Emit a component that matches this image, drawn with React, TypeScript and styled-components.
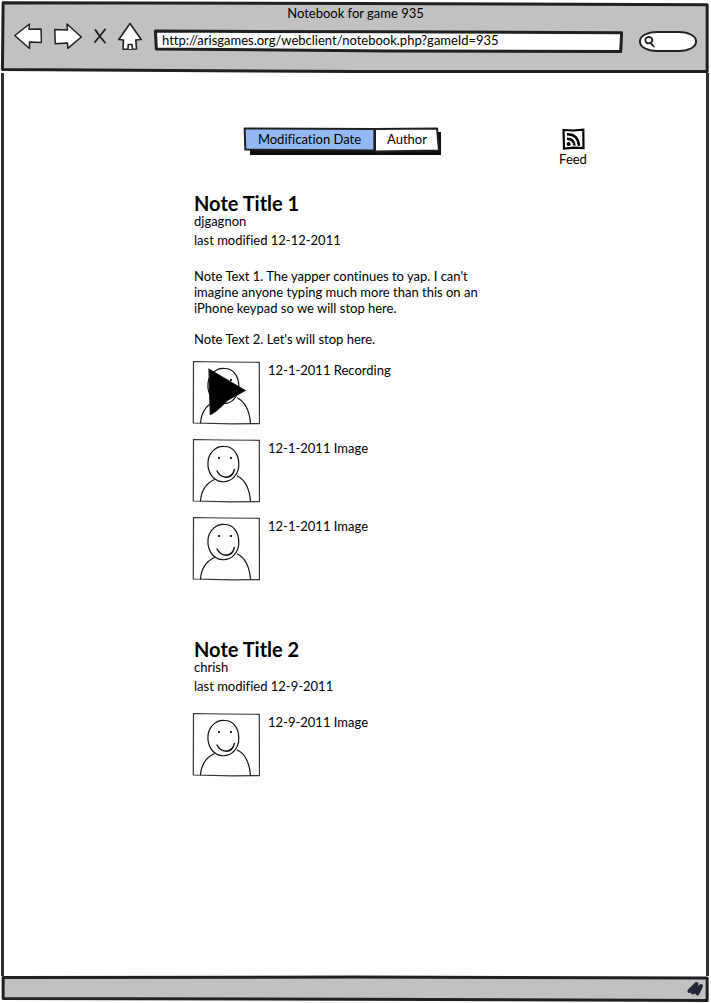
import React, { useState } from "react";
import styled, { createGlobalStyle } from "styled-components";

const ink = "#1e2022";
const grey = "#c1c1c1";

const GlobalStyle = createGlobalStyle`
  * { box-sizing: border-box; }
  body {
    margin: 0;
    background: #fff;
    color: #000;
    font: 13px/16px Lato, "Open Sans", sans-serif;
    font-variant-ligatures: none;
  }
  button, input { font: inherit; color: inherit; font-variant-ligatures: none; }
  h2, p, ul { margin: 0; padding: 0; }
`;

const BrowserWindow = styled.div`
  display: flex;
  flex-direction: column;
  min-height: 100vh;
  padding: 2px 1px;
`;

const OutlineSvg = styled.svg`
  position: absolute;
  inset: 0;
  width: 100%;
  height: 100%;
  overflow: visible;
  pointer-events: none;
  z-index: -1;
`;

/* A slightly uneven four-sided outline that stretches with its parent. */
function Outline({ points, fill, weight = 3 }: { points: string; fill: string; weight?: number }) {
  return (
    <OutlineSvg viewBox="0 0 100 100" preserveAspectRatio="none" aria-hidden="true">
      <polygon points={points} fill={fill} stroke={ink} strokeWidth={weight} strokeLinejoin="round" vectorEffect="non-scaling-stroke" />
    </OutlineSvg>
  );
}

const Header = styled.header`
  position: relative;
  z-index: 0;
  height: 71px;
  padding: 3px 13px 0 13px;
`;

const WindowTitle = styled.div`
  text-align: center;
`;

const Toolbar = styled.div`
  display: flex;
  align-items: flex-end;
  gap: 15px;
  height: 31px;
`;

const Nav = styled.nav`
  display: flex;
  align-items: center;
  gap: 12px;
  padding-bottom: 2px;
  margin-right: -3px;
`;

const IconButton = styled.button`
  display: flex;
  padding: 0;
  border: 0;
  background: none;
  cursor: pointer;
`;

const AddressBox = styled.label`
  position: relative;
  z-index: 0;
  display: flex;
  flex: 1;
  height: 22px;
`;

const AddressInput = styled.input`
  width: 100%;
  padding: 0 8px 2px;
  border: 0;
  outline: 0;
  background: none;
`;

const SearchBox = styled.label`
  display: flex;
  align-items: center;
  width: 58px;
  height: 21px;
  padding-left: 3px;
  border: 2px solid ${ink};
  border-radius: 18px / 10px;
  background: #fff;
`;

const SearchInput = styled.input`
  width: 34px;
  padding: 0;
  border: 0;
  outline: 0;
  background: none;
`;

const Page = styled.main`
  flex: 1;
  margin: 0 1px 0 0;
  padding: 55px 116px 48px 188px;
  border: solid #2e3034;
  border-width: 0 3px;
`;

const PageControls = styled.div`
  display: flex;
  justify-content: space-between;
  align-items: flex-start;
  height: 39px;
  padding-left: 52px;
`;

const Tabs = styled.div`
  position: relative;
  z-index: 0;
  display: flex;
  height: 24px;
  &::before {
    content: "";
    position: absolute;
    z-index: -1;
    inset: 4px -2px -3px 6px;
    background: #0c0e12;
  }
`;

const Tab = styled.button<{ $width: number }>`
  position: relative;
  z-index: 0;
  width: ${(p) => p.$width}px;
  padding: 0 0 2px;
  border: 0;
  background: none;
  text-align: center;
  cursor: pointer;
`;

const FeedLink = styled.a`
  display: flex;
  flex-direction: column;
  align-items: center;
  gap: 1px;
  width: 34px;
  color: inherit;
  text-decoration: none;
`;

const Note = styled.article`
  padding-top: 26px;
  & + & { padding-top: 58px; }
`;

const NoteTitle = styled.h2`
  padding-left: 2px;
  font-size: 20px;
  font-weight: 700;
  line-height: 20px;
`;

const NoteMeta = styled.p`
  padding: 0 0 3px 2px;
`;

const NoteText = styled.p`
  max-width: 290px;
  margin-bottom: 15px;
  padding-left: 2px;
`;

const NoteBody = styled.div`
  padding-top: 17px;
`;

const Attachments = styled.ul`
  display: grid;
  gap: 13px;
  margin-top: -2px;
  list-style: none;
`;

const Attachment = styled.li`
  display: flex;
  gap: 8px;
  height: 65px;
`;

const Caption = styled.span`
  padding-top: 2px;
`;

const Footer = styled.footer`
  position: relative;
  z-index: 0;
  display: flex;
  justify-content: flex-end;
  height: 25px;
  padding: 5px 6px 0 0;
`;

function Photo({ playable = false }: { playable?: boolean }) {
  return (
    <svg width="68" height="65" viewBox="0 0 68 65" fill="none" stroke="#111" strokeWidth="1.2" role="img" aria-label={playable ? "Play recording" : "Portrait"}>
      <path d="M1.5 1.5 L30 2 L67.3 2.3 L67.5 63.7 L40 63.8 L1.3 63 Z" stroke="#34343a" />
      <path d="M32 8.5 C24 8 16.5 15 16 24 C15.3 34 21 43 30 43.7 C40 44.5 47 36 46.8 26 C46.8 16 41 8 32 8.5Z" />
      <path d="M24.7 32.5 Q28 39 34 39.2 Q41 39 42.5 31" strokeWidth="1.4" />
      <path d="M22.5 41.5 Q9.5 47.5 8.5 63.3 M45 37.7 Q57 43.5 58.5 63.5" />
      <path d="M26.1 20h1.8 M38.1 20h1.8" strokeWidth="1.8" />
      {playable && <path d="M17 9.3 L53 30.6 L35 40.5 Q23 53 18.3 54.3 Z" fill="#000" />}
    </svg>
  );
}

type NoteData = {
  title: string;
  author: string;
  modified: string;
  texts: string[];
  files: { date: string; kind: "Image" | "Recording" }[];
};

const notes: NoteData[] = [
  {
    title: "Note Title 1",
    author: "djgagnon",
    modified: "12-12-2011",
    texts: [
      "Note Text 1. The yapper continues to yap. I can't imagine anyone typing much more than this on an iPhone keypad so we will stop here.",
      "Note Text 2. Let's will stop here.",
    ],
    files: [
      { date: "12-1-2011", kind: "Recording" },
      { date: "12-1-2011", kind: "Image" },
      { date: "12-1-2011", kind: "Image" },
    ],
  },
  {
    title: "Note Title 2",
    author: "chrish",
    modified: "12-9-2011",
    texts: [],
    files: [{ date: "12-9-2011", kind: "Image" }],
  },
];

export default function App() {
  const [sort, setSort] = useState("date");
  const tint = (on: boolean) => (on ? "#94b9f2" : "#fff");
  return (
    <BrowserWindow>
      <GlobalStyle />
      <Header>
        <Outline points="0.3,1 50,2 99.6,4 99.6,98 50,98 0.2,95" fill={grey} />
        <WindowTitle>Notebook for game 935</WindowTitle>
        <Toolbar>
          <Nav aria-label="Browser">
            <IconButton aria-label="Back">
              <svg width="28" height="28" viewBox="0 0 28 28" fill="#fff" stroke={ink} strokeWidth="1.5" strokeLinejoin="round">
                <path d="M0.8 13.5 L15.5 2 L15 7.3 L27 7 L27.5 20.5 L15.5 20 L15.5 26.5 Z" />
              </svg>
            </IconButton>
            <IconButton aria-label="Forward">
              <svg width="28" height="28" viewBox="0 0 28 28" fill="#fff" stroke={ink} strokeWidth="1.5" strokeLinejoin="round">
                <path d="M0.8 7.5 L13.5 8 L13 2 L27.3 15 L13.8 26.3 L13.5 21 L1.2 21.8 Z" />
              </svg>
            </IconButton>
            <IconButton aria-label="Stop">
              <svg width="12" height="28" viewBox="1 0 12 28" fill="none" stroke={ink} strokeWidth="1.8" strokeLinecap="round">
                <path d="M2.4 8 Q6 14 12 20.5 M12 7.5 Q7 14 2 20" />
              </svg>
            </IconButton>
            <IconButton aria-label="Home">
              <svg width="24" height="28" viewBox="0 0 24 28" fill="#fff" stroke={ink} strokeWidth="1.6" strokeLinejoin="round">
                <path d="M12 1.5 L23.2 17.5 L17.8 18 L18.5 27 L5 27.2 L5.5 18 L0.8 17.5 Z" />
                <path d="M10 27 L10.3 22.5 L14 22.5 L14.5 27" />
              </svg>
            </IconButton>
          </Nav>
          <AddressBox>
            <Outline points="0.3,5 50,8 99.5,12 99.3,98 50,95 0.5,86" fill="#fff" />
            <AddressInput aria-label="Address" defaultValue="http://arisgames.org/webclient/notebook.php?gameId=935" />
          </AddressBox>
          <SearchBox>
            <svg width="12" height="13" viewBox="0 0 12 13" fill="none" stroke={ink} strokeWidth="1.8" strokeLinecap="round">
              <path d="M5 2 C2 2 1 4 1.5 6 C2 8.5 5 9 7 7.5 C9.5 5.5 8 2 5 2Z M6.5 7.8 L9.7 11.5" />
            </svg>
            <SearchInput aria-label="Search" />
          </SearchBox>
        </Toolbar>
      </Header>

      <Page>
        <PageControls>
          <Tabs>
            <Tab $width={131} aria-pressed={sort === "date"} onClick={() => setSort("date")}>
              <Outline points="0.5,2 99.5,4 99.5,94 1,90" fill={tint(sort === "date")} weight={2} />
              Modification Date
            </Tab>
            <Tab $width={64} aria-pressed={sort === "author"} onClick={() => setSort("author")}>
              <Outline points="0,4 97,2 100,94 0,98" fill={tint(sort === "author")} weight={2} />
              Author
            </Tab>
          </Tabs>
          <FeedLink href="#feed">
            <svg width="23" height="22" viewBox="0 0 23 22" fill="none" stroke="#000" strokeWidth="2.2">
              <path d="M1.5 2 L11 2.5 L21.3 1.6 L21.5 20 L12 19.6 L2 20.5 Z" />
              <path d="M5 6.3 Q16 6 17 17.8 M5 10.8 Q12 11 12.5 17.5" strokeWidth="2.4" />
              <circle cx="6.6" cy="16" r="2.1" fill="#000" stroke="none" />
            </svg>
            Feed
          </FeedLink>
        </PageControls>

        {notes.map((note) => (
          <Note key={note.title}>
            <NoteTitle>{note.title}</NoteTitle>
            <NoteMeta>{note.author}</NoteMeta>
            <NoteMeta>last modified {note.modified}</NoteMeta>
            <NoteBody>
              {note.texts.map((text) => (
                <NoteText key={text}>{text}</NoteText>
              ))}
              <Attachments>
                {note.files.map((file, i) => (
                  <Attachment key={i}>
                    <Photo playable={file.kind === "Recording"} />
                    <Caption>
                      {file.date} {file.kind}
                    </Caption>
                  </Attachment>
                ))}
              </Attachments>
            </NoteBody>
          </Note>
        ))}
      </Page>

      <Footer>
        <Outline points="0.3,6 50,4 99.6,8 99.6,98 50,93 0.3,90" fill={grey} />
        <svg width="17" height="16" viewBox="0 0 17 16" fill="none" stroke="#25263a" strokeWidth="4" strokeLinecap="round" strokeLinejoin="round">
          <path d="M2.5 10 L9.5 3 L6 11.5 L14 5 L10.5 12.5" />
        </svg>
      </Footer>
    </BrowserWindow>
  );
}
